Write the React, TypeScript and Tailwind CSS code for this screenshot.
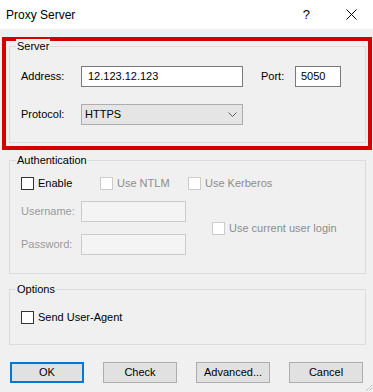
import React from "react";

function Group({ label, className, children }: { label: string; className?: string; children: React.ReactNode }) {
  return (
    <div className={`relative ml-[9px] w-[357px] border border-[#dcdcdc] ${className ?? ""}`}>
      <span className="absolute -top-[8px] left-[6px] bg-[#f0f0f0] px-[1px] leading-[14px] text-black">{label}</span>
      {children}
    </div>
  );
}

function Check({ label, disabled }: { label: string; disabled?: boolean }) {
  return (
    <div className="flex items-center h-[13px]">
      <span
        className={`w-[13px] h-[13px] border bg-white ${disabled ? "border-[#cccccc]" : "border-[#333333]"}`}
      />
      <span className={`ml-[4px] leading-[13px] ${disabled ? "text-[#8d8d8d]" : "text-black"}`}>{label}</span>
    </div>
  );
}

function Btn({ label, primary }: { label: string; primary?: boolean }) {
  return (
    <button
      type="button"
      className={`w-[74px] h-[21px] bg-[#e1e1e1] text-black leading-none ${
        primary ? "border-2 border-[#0078d7]" : "border border-[#adadad]"
      }`}
    >
      {label}
    </button>
  );
}

export default function App() {
  return (
    <div
      className="relative w-[373px] h-[392px] bg-[#f0f0f0] text-[11px] text-black overflow-hidden"
      style={{ fontFamily: '"Liberation Sans", Arial, sans-serif' }}
    >
      {/* title bar */}
      <div className="h-[29px] bg-white flex items-center pl-[6px]">
        <span className="text-[12px] text-black">Proxy Server</span>
        <span className="ml-auto text-[13px] text-black mr-[36px]">?</span>
        <svg width="11" height="11" viewBox="0 0 11 11" className="mr-[16px]">
          <path d="M0.5 0.5 L10.5 10.5 M10.5 0.5 L0.5 10.5" stroke="#000" strokeWidth="1" />
        </svg>
      </div>

      {/* highlighted server group */}
      <div className="mt-[8px] ml-[2px] w-[370px] border-4 border-[#d40000] pt-[5px] pb-[3px] pl-[3px]">
        <div className="relative w-[357px] border border-[#dcdcdc] pt-[19px] pb-[17px] pl-[11px]">
          <span className="absolute -top-[8px] left-[6px] bg-[#f0f0f0] px-[1px] leading-[14px]">Server</span>
          <div className="flex items-center h-[21px]">
            <span className="w-[60px]">Address:</span>
            <div className="w-[162px] h-[21px] border border-[#7a7a7a] bg-white flex items-center pl-[6px]">
              12.123.12.123
            </div>
            <span className="ml-[18px] w-[34px]">Port:</span>
            <div className="w-[46px] h-[21px] border border-[#7a7a7a] bg-white flex items-center pl-[5px]">5050</div>
          </div>
          <div className="flex items-center h-[21px] mt-[17px]">
            <span className="w-[60px]">Protocol:</span>
            <div className="w-[162px] h-[21px] border border-[#adadad] bg-[#e5e5e5] flex items-center pl-[3px] pr-[5px]">
              <span>HTTPS</span>
              <svg width="9" height="5" viewBox="0 0 9 5" className="ml-auto">
                <path d="M0.5 0.5 L4.5 4.5 L8.5 0.5" fill="none" stroke="#606060" strokeWidth="1" />
              </svg>
            </div>
          </div>
        </div>
      </div>

      {/* authentication */}
      <Group label="Authentication" className="mt-[10px] pt-[16px] pb-[18px] pl-[11px]">
        <div className="flex items-center">
          <div className="w-[79px]">
            <Check label="Enable" />
          </div>
          <div className="w-[88px]">
            <Check label="Use NTLM" disabled />
          </div>
          <Check label="Use Kerberos" disabled />
        </div>
        <div className="flex items-center mt-[11px]">
          <div className="flex flex-col gap-[12px]">
            <div className="flex items-center h-[21px]">
              <span className="w-[60px] text-[#9a9a9a]">Username:</span>
              <div className="w-[105px] h-[21px] border border-[#cccccc] bg-[#f4f4f4]" />
            </div>
            <div className="flex items-center h-[21px]">
              <span className="w-[60px] text-[#9a9a9a]">Password:</span>
              <div className="w-[105px] h-[21px] border border-[#cccccc] bg-[#f4f4f4]" />
            </div>
          </div>
          <div className="ml-[26px]">
            <Check label="Use current user login" disabled />
          </div>
        </div>
      </Group>

      {/* options */}
      <Group label="Options" className="mt-[15px] pt-[21px] pb-[20px] pl-[11px]">
        <Check label="Send User-Agent" />
      </Group>

      {/* buttons */}
      <div className="flex gap-[19px] pl-[10px] mt-[17px]">
        <Btn label="OK" primary />
        <Btn label="Check" />
        <Btn label="Advanced..." />
        <Btn label="Cancel" />
      </div>

      <svg width="10" height="10" viewBox="0 0 10 10" className="absolute right-0 bottom-0">
        <path d="M9 3 L3 9 M9 6 L6 9" stroke="#a0a0a0" strokeWidth="1" strokeDasharray="1 1" />
      </svg>
    </div>
  );
}
